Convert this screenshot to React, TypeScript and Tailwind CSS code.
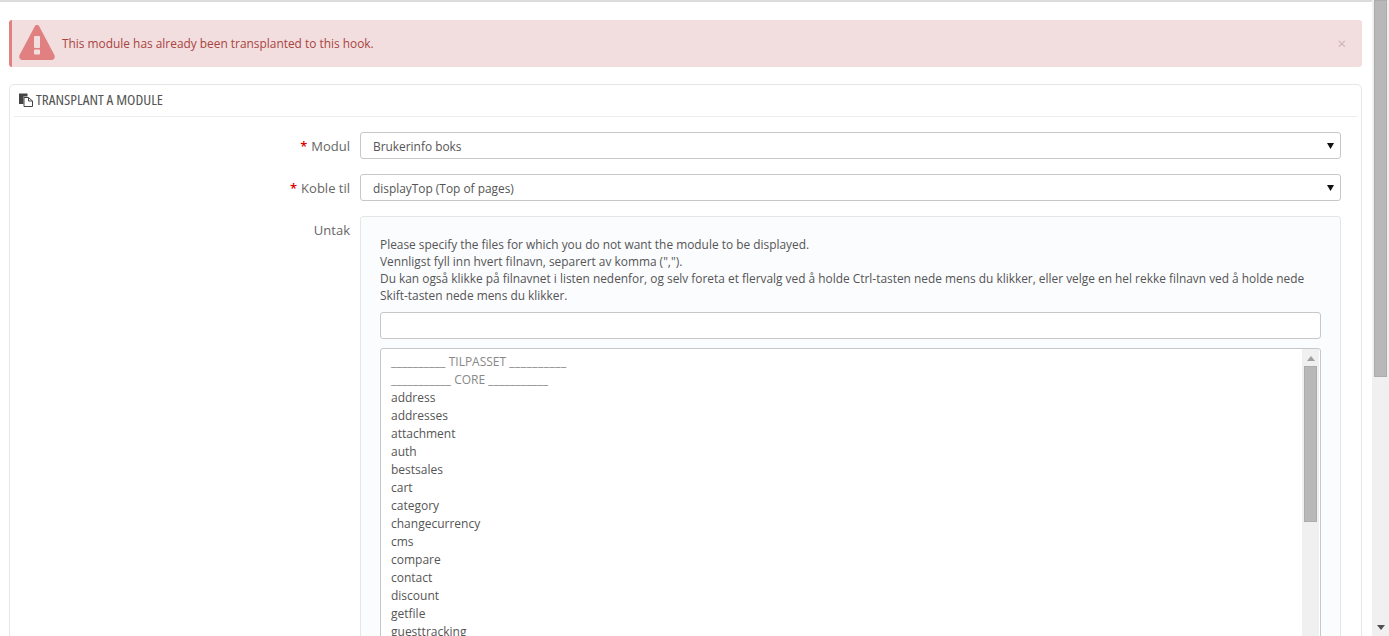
import React from "react";

const files = ["address", "addresses", "attachment", "auth", "bestsales", "cart", "category", "changecurrency", "cms", "compare", "contact", "discount", "getfile", "guesttracking"];

const WarnIcon = () => (
    <svg width="36" height="35" viewBox="0 0 36 35" className="shrink-0 -mt-[2px]">
        <path d="M18 0 C19 0 19.8 .5 20.3 1.4 L35.4 30 C36.6 32.4 35 35 32.5 35 L3.5 35 C1 35 -.6 32.4 .6 30 L15.7 1.4 C16.2 .5 17 0 18 0 Z" fill="#e08080"/>
        <rect x="15" y="11" width="6" height="12" rx="1" fill="#f2dede"/>
        <rect x="15" y="24.5" width="6" height="5" rx="1" fill="#f2dede"/>
    </svg>
);

const PasteIcon = () => (
    <svg width="14" height="14" viewBox="0 0 14 14" className="shrink-0">
        <path d="M0 .5 H8.5 V3.5 H4.5 V11 H0 Z" fill="#444"/>
        <path d="M5 4.5 H9.5 L13.5 8 V13.5 H5 Z" fill="#fff" stroke="#444" strokeWidth="1"/>
        <path d="M9.5 4.5 V8 H13.5" fill="none" stroke="#444" strokeWidth="1"/>
    </svg>
);

const FakeSelect: React.FC<{label: string; value: string}> = ({label, value}) => (
    <div className="flex items-center">
        <div className="w-[346px] pr-[10px] pt-[2px] text-right text-[13px] text-[#666]">
            <span className="text-[#e00000] font-semibold mr-1">*</span>{label}
        </div>
        <div className="flex-1 h-[27px] flex items-center justify-between pl-[12px] pr-[6px] bg-white border border-[#c7c7c7] rounded-[3px] text-[11.9px] text-[#555]">
            <span className="pt-[2px]">{value}</span>
            <svg width="7" height="6" viewBox="0 0 7 6"><path d="M0 0 H7 L3.5 6 Z" fill="#111"/></svg>
        </div>
    </div>
);

export default function App() {
    return (
        <div className="relative flex h-[636px] overflow-hidden bg-white font-['Open_Sans',sans-serif]">
            <main className="flex-1 min-w-0 border-t-2 border-t-[#dcdcdc] pl-[9px] pr-[10px] pt-[18px]">
                <div className="h-[47px] flex items-center bg-[#f2dede] border-l-[3px] border-l-[#e08080] rounded-[3px] pl-[7px] pr-[16px] text-[11.9px] text-[#a94442]">
                    <WarnIcon/>
                    <span className="ml-[7px] flex-1">This module has already been transplanted to this hook.</span>
                    <span className="text-[15px] text-[#c9b5b5]">×</span>
                </div>

                <section className="mt-[17px] h-[600px] px-[4px] bg-white border border-[#e6e6e6] rounded-[5px]">
                    <header className="h-[32px] flex items-center gap-[3px] pl-[5px] pb-[2px] border-b border-[#eeeeee] text-[15.3px] text-[#555] [font-stretch:75%]">
                        <PasteIcon/>
                        <span>TRANSPLANT A MODULE</span>
                    </header>

                    <div className="mt-[15px] pr-[16px] flex flex-col gap-[15px]">
                        <FakeSelect label="Modul" value="Brukerinfo boks"/>
                        <FakeSelect label="Koble til" value="displayTop (Top of pages)"/>

                        <div className="flex">
                            <div className="w-[346px] pr-[10px] pt-[5px] text-right text-[13px] text-[#666]">Untak</div>
                            <div className="flex-1 pt-[18.5px] px-[19px] bg-[#fbfcfe] border border-[#e6e6e6] rounded-[3px] h-[500px]">
                                <div className="text-[11.9px] leading-[17.3px] text-[#555]">
                                    <p>Please specify the files for which you do not want the module to be displayed.</p>
                                    <p>Vennligst fyll inn hvert filnavn, separert av komma (",").</p>
                                    <p>Du kan også klikke på filnavnet i listen nedenfor, og selv foreta et flervalg ved å holde Ctrl-tasten nede mens du klikker, eller velge en hel rekke filnavn ved å holde nede <span className="whitespace-nowrap">Skift-tasten</span> nede mens du klikker.</p>
                                </div>
                                <div className="mt-[7.5px] h-[27px] bg-white border border-[#c7c7c7] rounded-[3px]"/>
                                <div className="mt-[9px] h-[400px] flex bg-white border border-[#c7c7c7] rounded-[3px] overflow-hidden">
                                    <ul className="flex-1 pl-[10px] pt-[4px] text-[12px] leading-[18px] text-[#555]">
                                        <li className="text-[#888]"><span className="tracking-[0.2px]">__________</span> TILPASSET <span className="tracking-[0.5px]">__________</span></li>
                                        <li className="text-[#888]"><span className="tracking-[0.2px]">___________</span> CORE <span className="tracking-[0.2px]">___________</span></li>
                                        {files.map((f) => (
                                            <li key={f}>{f}</li>
                                        ))}
                                    </ul>
                                    <div className="w-[17px] mr-[1px] bg-[#f0f0f0] flex flex-col items-center pt-[7px]">
                                        <svg width="8" height="5" viewBox="0 0 8 5"><path d="M0 5 H8 L4 0 Z" fill="#a0a0a0"/></svg>
                                        <div className="mt-[5px] w-[13px] h-[156px] bg-[#b8b8b8] border border-[#acacac]"/>
                                    </div>
                                </div>
                            </div>
                        </div>
                    </div>
                </section>
            </main>

            <div className="w-[17px] bg-[#f0f0f0] pl-[2px]">
                <div className="w-[13px] h-[377px] bg-[#b8b8b8] border border-[#acacac]"/>
            </div>
            <svg width="8" height="5" viewBox="0 0 8 5" className="absolute left-[1377px] top-[625px]"><path d="M0 0 H8 L4 5 Z" fill="#505050"/></svg>
        </div>
    );
}
